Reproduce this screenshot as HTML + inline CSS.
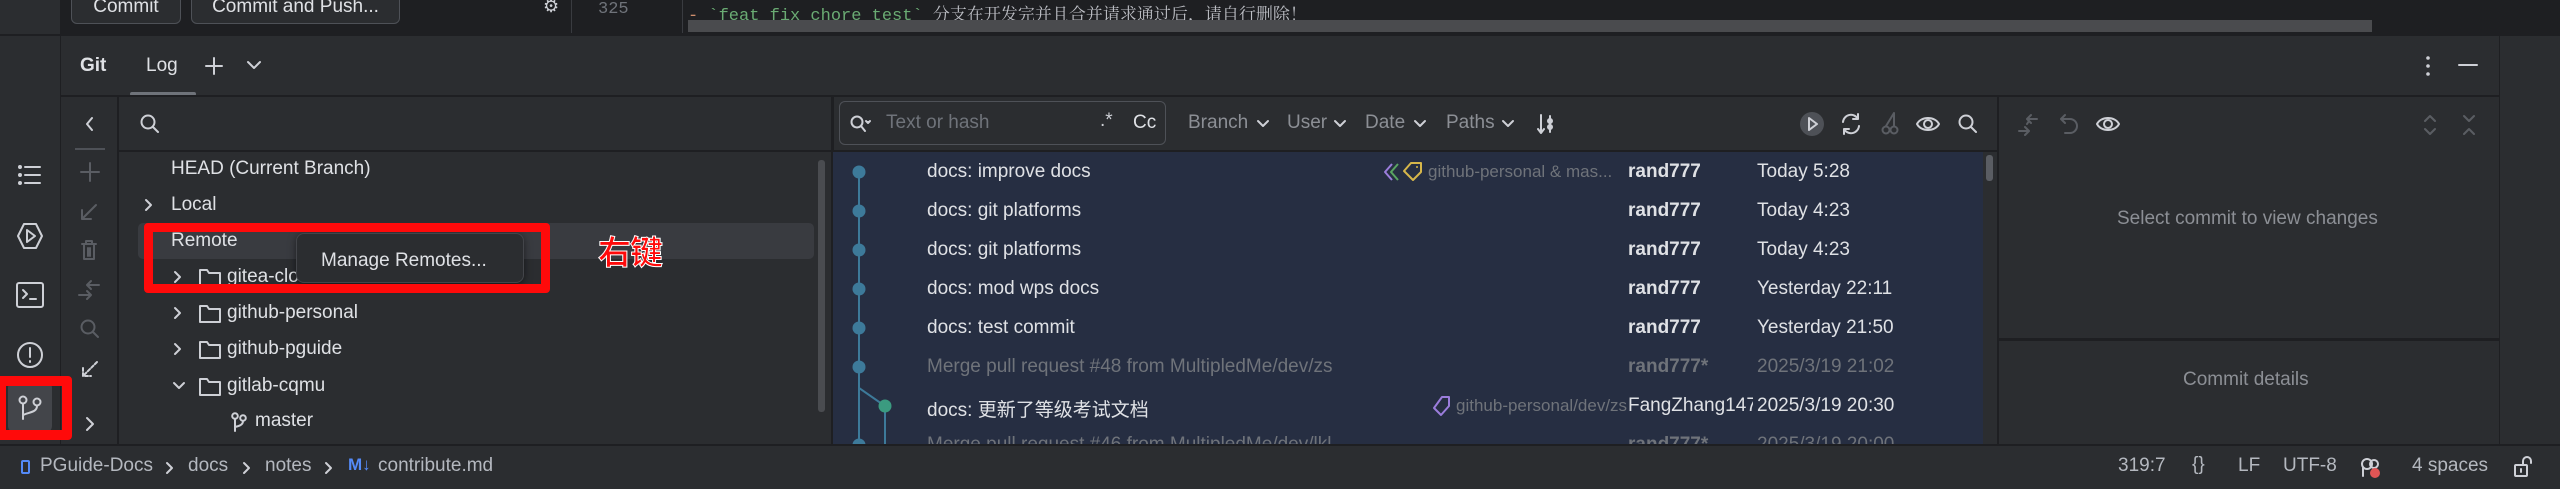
<!DOCTYPE html>
<html><head><meta charset="utf-8"><style>
*{margin:0;padding:0;box-sizing:border-box}
body{width:2560px;height:489px;background:#2b2d30;position:relative;overflow:hidden;font-family:"Liberation Sans","Noto Sans CJK SC",sans-serif;color:#dfe1e5;font-size:19px}
.a{position:absolute;white-space:nowrap}
svg{position:absolute;overflow:visible}
.ic{fill:none;stroke:#ced0d6;stroke-width:2;stroke-linecap:round;stroke-linejoin:round}
.dim{stroke:#5a5d63}
.row{position:absolute;left:0;height:39px;width:1150px}
.msg{position:absolute;left:94px;top:9px}
.au{position:absolute;left:795px;top:9px;font-weight:bold}
.dt{position:absolute;left:924px;top:9px}
.gr{color:#6f737a}
</style></head><body>
<!-- top editor strip -->
<div class="a" style="left:0;top:0;width:2560px;height:35px;background:#1e1f22"></div>
<div class="a" style="left:0;top:0;width:60px;height:35px;background:#2b2d30"></div>
<div class="a" style="left:71px;top:-8px;width:110px;height:32px;border:1.5px solid #4e5157;border-radius:6px;background:#2b2d30;text-align:center;line-height:28px;font-size:19px">Commit</div>
<div class="a" style="left:191px;top:-8px;width:209px;height:32px;border:1.5px solid #4e5157;border-radius:6px;background:#2b2d30;text-align:center;line-height:28px;font-size:19px">Commit and Push...</div>
<div class="a" style="left:543px;top:-4px;font-size:18px;color:#ced0d6">⚙</div>
<div class="a" style="left:571px;top:0;width:1px;height:33px;background:#393b40"></div>
<div class="a" style="left:598px;top:0;font-family:'Liberation Mono',monospace;font-size:17px;color:#6f737a">325</div>
<div class="a" style="left:682px;top:0;width:1px;height:33px;background:#393b40"></div>
<div class="a" style="left:688px;top:0;font-family:'Liberation Mono','Noto Sans CJK SC',monospace;font-size:17px;color:#6aab73"><span style="color:#cf8e6d">-</span> `feat fix chore test` <span style="color:#bcbec4;font-family:'Noto Serif CJK SC',serif">分支在开发完并且合并请求通过后，请自行删除！</span></div>
<div class="a" style="left:688px;top:20px;width:1684px;height:12px;background:#4a4b4e"></div>
<div class="a" style="left:0;top:34px;width:2560px;height:2px;background:#1e1f22"></div>

<!-- activity bar -->
<div class="a" style="left:60px;top:36px;width:1px;height:409px;background:#1e1f22"></div>
<svg style="left:18px;top:165px" width="24" height="20" class="ic"><circle cx="2" cy="2" r="1" fill="#ced0d6"/><circle cx="2" cy="10" r="1" fill="#ced0d6"/><circle cx="2" cy="18" r="1" fill="#ced0d6"/><path d="M7 2h15M7 10h15M7 18h15"/></svg>
<svg style="left:16px;top:222px" width="28" height="28" class="ic"><path d="M8 2h12l6 12-6 12H8L2 14z"/><path d="M11 8l8 6-8 6z"/></svg>
<svg style="left:16px;top:282px" width="28" height="26" class="ic"><rect x="1" y="1" width="26" height="24" rx="2"/><path d="M7 8l4 4-4 4M14 17h6"/></svg>
<svg style="left:16px;top:341px" width="28" height="28" class="ic"><circle cx="14" cy="14" r="12"/><path d="M14 7v9M14 20v1"/></svg>
<div class="a" style="left:8px;top:382px;width:44px;height:50px;background:#43454a;border-radius:6px"></div>
<svg style="left:18px;top:395px" width="24" height="26" class="ic"><circle cx="5" cy="5" r="3.5"/><circle cx="19" cy="7" r="3.5"/><path d="M5 9v15M19 11c0 6-7 6-14 9"/></svg>
<div class="a" style="left:-4px;top:376px;width:76px;height:64px;border:10px solid #ff0a0a;border-radius:4px"></div>

<!-- header -->
<div class="a" style="left:80px;top:55px;font-weight:bold;font-size:19px">Git</div>
<div class="a" style="left:146px;top:55px;font-size:19px">Log</div>
<div class="a" style="left:130px;top:92px;width:66px;height:4px;background:#6f737a;border-radius:2px"></div>
<svg style="left:205px;top:57px" width="18" height="18" class="ic"><path d="M9 1v16M1 9h16"/></svg>
<svg style="left:247px;top:61px" width="14" height="9" class="ic"><path d="M1 1l6 6 6-6"/></svg>
<svg style="left:2426px;top:56px" width="4" height="20"><circle cx="2" cy="2" r="1.8" fill="#ced0d6"/><circle cx="2" cy="10" r="1.8" fill="#ced0d6"/><circle cx="2" cy="18" r="1.8" fill="#ced0d6"/></svg>
<svg style="left:2458px;top:64px" width="20" height="4" class="ic"><path d="M1 1h18"/></svg>
<div class="a" style="left:60px;top:95px;width:2440px;height:2px;background:#1e1f22"></div>
<div class="a" style="left:2499px;top:36px;width:1px;height:409px;background:#1e1f22"></div>

<!-- left toolbar column -->
<div class="a" style="left:117px;top:96px;width:2px;height:349px;background:#1e1f22"></div>
<svg style="left:86px;top:117px" width="8" height="14" class="ic"><path d="M6 1L1 7l5 6"/></svg>
<div class="a" style="left:75px;top:148px;width:30px;height:2px;background:#4e5157"></div>
<svg style="left:80px;top:162px" width="20" height="20" class="ic dim"><path d="M10 1v18M1 10h18"/></svg>
<svg style="left:81px;top:204px" width="16" height="16" class="ic dim"><path d="M15 1L1 15M1 6v9h9"/></svg>
<svg style="left:81px;top:240px" width="16" height="20" class="ic dim"><path d="M1 4h14M5 4V1h6v3M3 4v15h10V4M7 8v8M9 8v8"/></svg>
<svg style="left:78px;top:280px" width="22" height="20" class="ic dim"><path d="M21 5H9M13 1L9 5l4 4M1 15h12M9 11l4 4-4 4"/></svg>
<svg style="left:80px;top:319px" width="20" height="20" class="ic dim"><circle cx="8" cy="8" r="6.5"/><path d="M13 13l5 5"/></svg>
<svg style="left:82px;top:361px" width="16" height="16" class="ic"><path d="M15 1L1 15M1 7v8h8" stroke-dasharray="3 2"/></svg>
<svg style="left:86px;top:417px" width="8" height="14" class="ic"><path d="M1 1l6 6-6 6"/></svg>

<!-- branch tree -->
<svg style="left:140px;top:114px" width="20" height="20" class="ic"><circle cx="8" cy="8" r="6.5"/><path d="M13 13l5 5"/></svg>
<div class="a" style="left:119px;top:150px;width:714px;height:2px;background:#1e1f22"></div>
<div class="a" style="left:138px;top:223px;width:676px;height:36px;background:#393b40;border-radius:5px"></div>
<div class="a" style="left:171px;top:158px">HEAD (Current Branch)</div>
<svg style="left:145px;top:199px" width="8" height="12" class="ic"><path d="M1 1l5 5-5 5"/></svg>
<div class="a" style="left:171px;top:194px">Local</div>
<div class="a" style="left:171px;top:230px">Remote</div>
<svg style="left:174px;top:271px" width="8" height="12" class="ic"><path d="M1 1l5 5-5 5"/></svg>
<svg style="left:199px;top:268px" width="22" height="19" class="ic"><path d="M1 2h7l2 3h11v13H1z"/></svg>
<div class="a" style="left:227px;top:266px">gitea-cloud</div>
<svg style="left:174px;top:307px" width="8" height="12" class="ic"><path d="M1 1l5 5-5 5"/></svg>
<svg style="left:199px;top:304px" width="22" height="19" class="ic"><path d="M1 2h7l2 3h11v13H1z"/></svg>
<div class="a" style="left:227px;top:302px">github-personal</div>
<svg style="left:174px;top:343px" width="8" height="12" class="ic"><path d="M1 1l5 5-5 5"/></svg>
<svg style="left:199px;top:340px" width="22" height="19" class="ic"><path d="M1 2h7l2 3h11v13H1z"/></svg>
<div class="a" style="left:227px;top:338px">github-pguide</div>
<svg style="left:173px;top:382px" width="12" height="8" class="ic"><path d="M1 1l5 5 5-5"/></svg>
<svg style="left:199px;top:377px" width="22" height="19" class="ic"><path d="M1 2h7l2 3h11v13H1z"/></svg>
<div class="a" style="left:227px;top:375px">gitlab-cqmu</div>
<svg style="left:231px;top:412px" width="16" height="20" class="ic"><circle cx="4" cy="4" r="2.8"/><circle cx="12" cy="6" r="2.8"/><path d="M4 7v12M12 9c0 4-4 5-8 6"/></svg>
<div class="a" style="left:255px;top:410px">master</div>
<div class="a" style="left:818px;top:160px;width:7px;height:252px;background:#4a4c50;border-radius:3px"></div>
<div class="a" style="left:831px;top:96px;width:3px;height:349px;background:#1e1f22"></div>

<!-- popup & annotation -->
<div class="a" style="left:296px;top:233px;width:228px;height:50px;background:#2b2d30;border:1.5px solid #43454a;border-radius:8px;box-shadow:0 2px 8px rgba(0,0,0,.5)"></div>
<div class="a" style="left:321px;top:250px">Manage Remotes...</div>
<div class="a" style="left:144px;top:223px;width:406px;height:70px;border:9px solid #ff0a0a;border-radius:4px"></div>
<div class="a" style="left:598px;top:226px;font-size:33px;font-weight:bold;color:#ff0a0a;-webkit-text-stroke:1px #fff;font-family:'Noto Sans CJK SC',sans-serif;letter-spacing:-1px">右键</div>

<!-- log toolbar -->
<div class="a" style="left:839px;top:101px;width:327px;height:44px;border:1.5px solid #4e5157;border-radius:6px"></div>
<svg style="left:850px;top:115px" width="22" height="18" class="ic"><circle cx="7" cy="7" r="5.5"/><path d="M11 11l4 5"/><path d="M16 6l2 2 2-2" fill="#ced0d6"/></svg>
<div class="a" style="left:886px;top:112px;color:#6f737a">Text or hash</div>
<div class="a" style="left:1100px;top:110px;color:#ced0d6">.*</div>
<div class="a" style="left:1133px;top:112px;color:#dfe1e5">Cc</div>
<div class="a" style="left:1188px;top:112px;color:#8c8f95">Branch</div>
<svg style="left:1257px;top:120px" width="12" height="7" class="ic"><path d="M1 1l5 5 5-5"/></svg>
<div class="a" style="left:1287px;top:112px;color:#8c8f95">User</div>
<svg style="left:1334px;top:120px" width="12" height="7" class="ic"><path d="M1 1l5 5 5-5"/></svg>
<div class="a" style="left:1365px;top:112px;color:#8c8f95">Date</div>
<svg style="left:1414px;top:120px" width="12" height="7" class="ic"><path d="M1 1l5 5 5-5"/></svg>
<div class="a" style="left:1446px;top:112px;color:#8c8f95">Paths</div>
<svg style="left:1502px;top:120px" width="12" height="7" class="ic"><path d="M1 1l5 5 5-5"/></svg>
<svg style="left:1537px;top:114px" width="20" height="22" class="ic"><path d="M4 1v18M1 15l3 4 3-4M13 2v16"/><circle cx="13" cy="7" r="2"/><circle cx="13" cy="13" r="2"/></svg>
<div class="a" style="left:1800px;top:112px;width:24px;height:24px;border-radius:12px;background:#4e5157"></div>
<svg style="left:1808px;top:117px" width="10" height="14" class="ic"><path d="M1 1l8 6-8 6z"/></svg>
<svg style="left:1840px;top:113px" width="22" height="22" class="ic"><path d="M3 9a8 8 0 0 1 15-3M19 13a8 8 0 0 1-15 3M18 1v5h-5M4 21v-5h5"/></svg>
<svg style="left:1881px;top:112px" width="18" height="24" class="ic dim"><circle cx="5" cy="18" r="3.5"/><circle cx="13" cy="18" r="3.5"/><path d="M5 14L13 1v13"/></svg>
<svg style="left:1916px;top:113px" width="26" height="24" class="ic"><path d="M1 11c4-8 18-8 22 0-4 8-18 8-22 0z"/><circle cx="12" cy="11" r="4"/></svg>
<svg style="left:1958px;top:114px" width="20" height="20" class="ic"><circle cx="8" cy="8" r="6.5"/><path d="M13 13l5 5"/></svg>
<div class="a" style="left:833px;top:150px;width:1166px;height:2px;background:#1e1f22"></div>

<!-- log rows -->
<div class="a" style="left:833px;top:152px;width:1150px;height:293px;background:#262e42;overflow:hidden">
 <svg style="left:0;top:0" width="80" height="293"><path d="M26 20v216L52 254v40" stroke="#3d7a9a" stroke-width="2" fill="none"/><path d="M26 236v60" stroke="#3d7a9a" stroke-width="2"/><g fill="#3d7a9a"><circle cx="26" cy="20" r="6.5"/><circle cx="26" cy="59" r="6.5"/><circle cx="26" cy="98" r="6.5"/><circle cx="26" cy="137" r="6.5"/><circle cx="26" cy="176" r="6.5"/><circle cx="26" cy="215" r="6.5"/><circle cx="26" cy="293" r="6.5"/></g><circle cx="52" cy="254" r="6.5" fill="#3b9b80"/></svg>
 <div class="row" style="top:0"><div class="msg">docs: improve docs</div>
  <svg style="left:550px;top:10px" width="40" height="20" fill="none" stroke-width="2" stroke-linejoin="round"><path d="M9 2L2 10l7 8" stroke="#9b7ddc"/><path d="M15 2L8 10l7 8" stroke="#5aa562"/><path d="M28 1h10v9l-8 8-9-9z" stroke="#d6b64a"/><circle cx="34" cy="5" r="1" fill="#d6b64a" stroke="none"/></svg>
  <div class="a gr" style="left:595px;top:10px;font-size:17px">github-personal &amp; mas...</div>
  <div class="au">rand777</div><div class="dt">Today 5:28</div></div>
 <div class="row" style="top:39px"><div class="msg">docs: git platforms</div><div class="au">rand777</div><div class="dt">Today 4:23</div></div>
 <div class="row" style="top:78px"><div class="msg">docs: git platforms</div><div class="au">rand777</div><div class="dt">Today 4:23</div></div>
 <div class="row" style="top:117px"><div class="msg">docs: mod wps docs</div><div class="au">rand777</div><div class="dt">Yesterday 22:11</div></div>
 <div class="row" style="top:156px"><div class="msg">docs: test commit</div><div class="au">rand777</div><div class="dt">Yesterday 21:50</div></div>
 <div class="row gr" style="top:195px"><div class="msg">Merge pull request #48 from MultipledMe/dev/zs</div><div class="au">rand777*</div><div class="dt">2025/3/19 21:02</div></div>
 <div class="row" style="top:234px"><div class="msg">docs: 更新了等级考试文档</div>
  <svg style="left:600px;top:10px" width="18" height="20" fill="none" stroke="#9b7ddc" stroke-width="2" stroke-linejoin="round"><path d="M9 1h7v9l-8 9-7-7z"/></svg>
  <div class="a gr" style="left:623px;top:10px;font-size:17px">github-personal/dev/zs</div>
  <div class="a" style="left:795px;top:9px;width:125px;overflow:hidden">FangZhang147</div><div class="dt">2025/3/19 20:30</div></div>
 <div class="row gr" style="top:273px"><div class="msg">Merge pull request #46 from MultipledMe/dev/lkl</div><div class="au">rand777*</div><div class="dt">2025/3/19 20:00</div></div>
</div>
<div class="a" style="left:1986px;top:155px;width:7px;height:26px;background:#5a5d63;border-radius:3px"></div>
<div class="a" style="left:1997px;top:96px;width:2px;height:349px;background:#1e1f22"></div>

<!-- right panel -->
<svg style="left:2018px;top:114px" width="20" height="22" class="ic dim"><path d="M19 5H10M13 1L9 5l4 4M1 17h9M7 13l4 4-4 4M9 10l2-3"/></svg>
<svg style="left:2060px;top:114px" width="18" height="20" class="ic dim"><path d="M5 1L1 5l4 4M1 5h9a7 7 0 0 1 0 14H5"/></svg>
<svg style="left:2096px;top:113px" width="26" height="24" class="ic"><path d="M1 11c4-8 18-8 22 0-4 8-18 8-22 0z"/><circle cx="12" cy="11" r="4"/></svg>
<svg style="left:2424px;top:115px" width="12" height="20" class="ic dim"><path d="M1 6l5-5 5 5M1 14l5 5 5-5"/></svg>
<svg style="left:2463px;top:115px" width="12" height="20" class="ic dim"><path d="M1 1l5 5 5-5M1 19l5-5 5 5"/></svg>
<div class="a" style="left:2117px;top:208px;color:#8c8f95">Select commit to view changes</div>
<div class="a" style="left:1999px;top:338px;width:500px;height:3px;background:#1e1f22"></div>
<div class="a" style="left:2183px;top:369px;color:#8c8f95">Commit details</div>

<!-- status bar -->
<div class="a" style="left:0;top:444px;width:2560px;height:2px;background:#1e1f22"></div>
<div class="a" style="left:21px;top:460px;width:9px;height:14px;border:2px solid #548af7;border-radius:2px"></div>
<div class="a" style="left:40px;top:455px;color:#b4b8bf">PGuide-Docs</div>
<svg style="left:166px;top:462px" width="8" height="12" class="ic"><path d="M1 1l5 5-5 5"/></svg>
<div class="a" style="left:188px;top:455px;color:#b4b8bf">docs</div>
<svg style="left:243px;top:462px" width="8" height="12" class="ic"><path d="M1 1l5 5-5 5"/></svg>
<div class="a" style="left:265px;top:455px;color:#b4b8bf">notes</div>
<svg style="left:325px;top:462px" width="8" height="12" class="ic"><path d="M1 1l5 5-5 5"/></svg>
<div class="a" style="left:348px;top:455px;color:#548af7;font-weight:bold;font-size:17px">M↓</div>
<div class="a" style="left:378px;top:455px;color:#b4b8bf">contribute.md</div>
<div class="a" style="left:2118px;top:455px;color:#b4b8bf">319:7</div>
<div class="a" style="left:2192px;top:454px;color:#b4b8bf">{}</div>
<div class="a" style="left:2238px;top:455px;color:#b4b8bf">LF</div>
<div class="a" style="left:2283px;top:455px;color:#b4b8bf">UTF-8</div>
<svg style="left:2360px;top:457px" width="22" height="22" class="ic"><circle cx="7" cy="7" r="5"/><circle cx="14" cy="7" r="4"/><path d="M3 11v8"/><circle cx="15" cy="16" r="5" fill="#e05555" stroke="none"/></svg>
<div class="a" style="left:2412px;top:455px;color:#b4b8bf">4 spaces</div>
<svg style="left:2514px;top:456px" width="18" height="22" class="ic"><rect x="1" y="9" width="12" height="11" rx="1"/><path d="M9 9V5a4 4 0 0 1 8 0v2M7 13v3"/></svg>
</body></html>
